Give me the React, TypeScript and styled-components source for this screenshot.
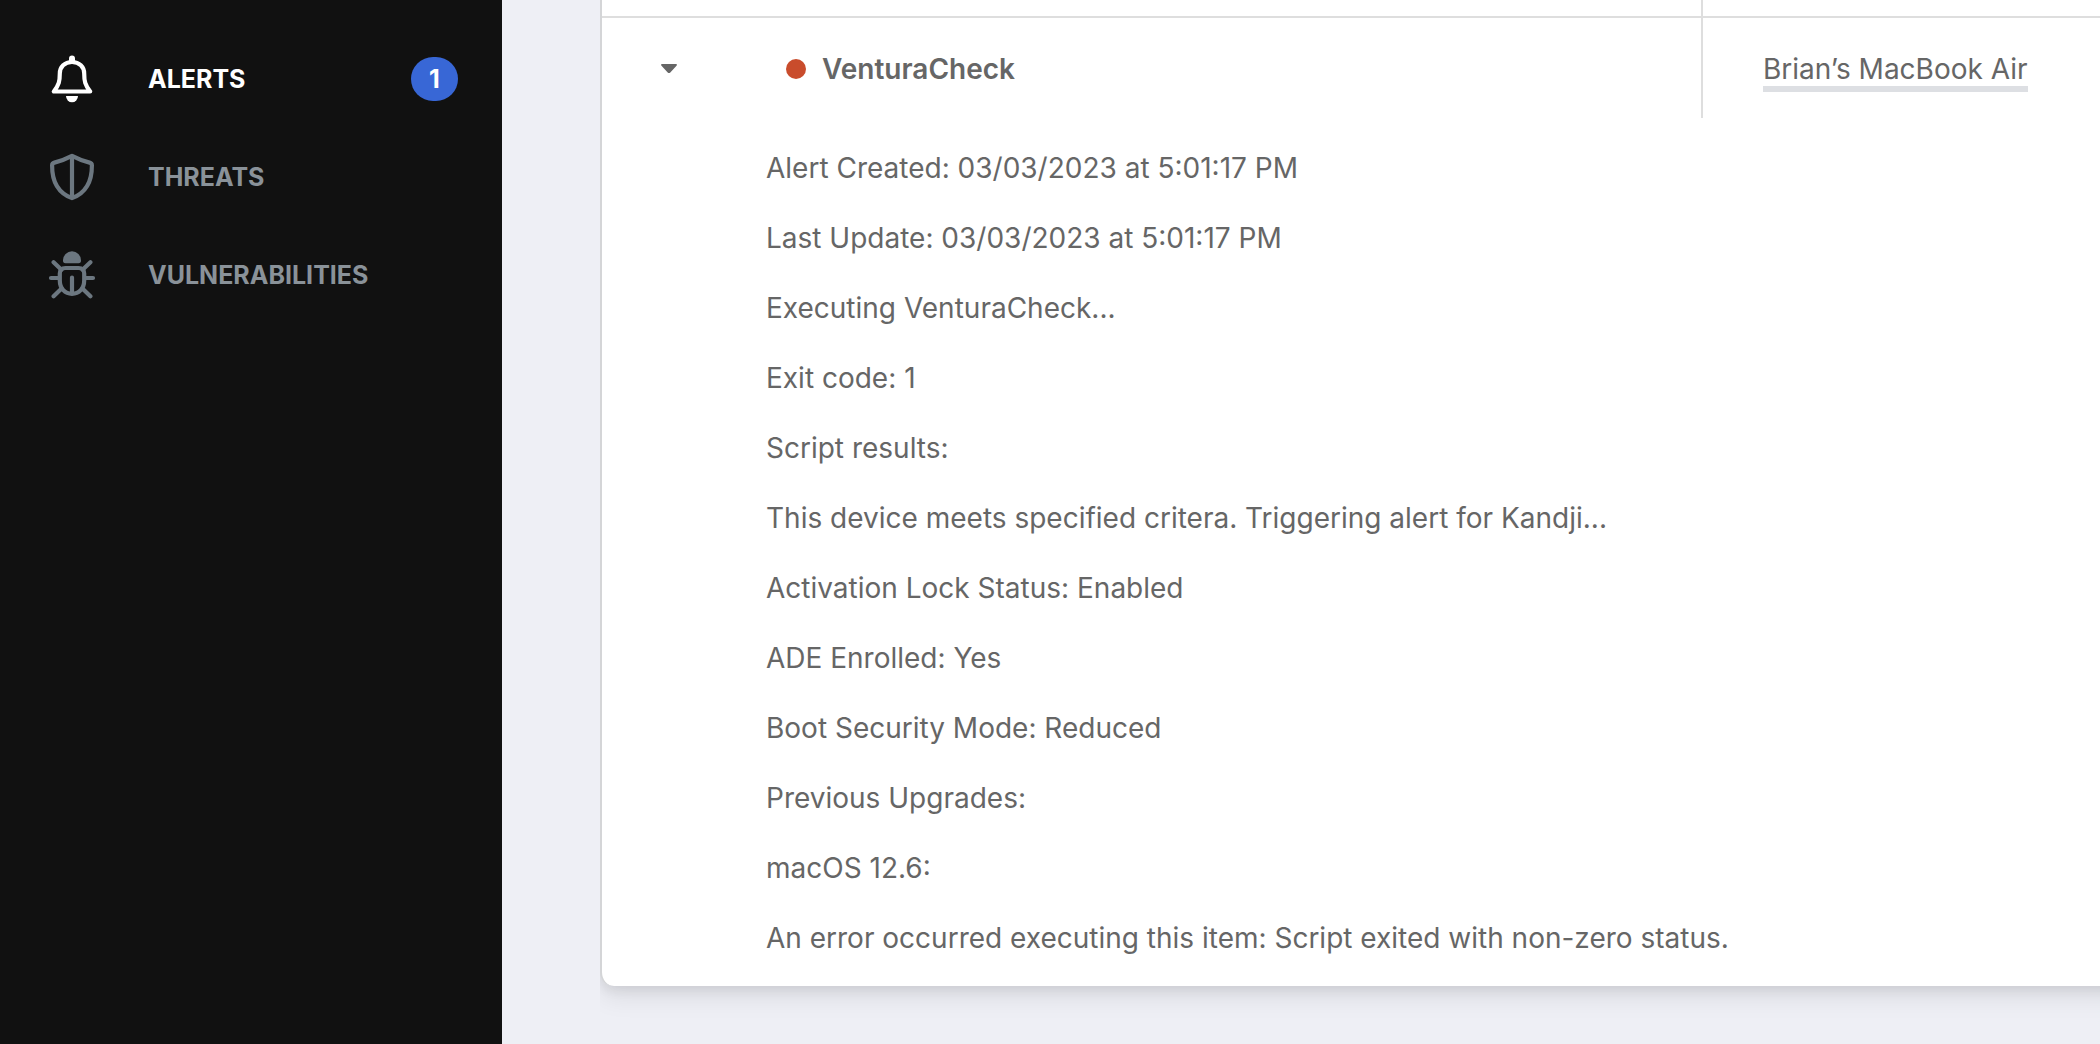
import React, { useState } from "react";
import styled, { createGlobalStyle } from "styled-components";

const GlobalStyle = createGlobalStyle`
  *, *::before, *::after { box-sizing: border-box; }
  body {
    margin: 0;
    background: #eeeff5;
    color: #666666;
    font-family: Inter, "Liberation Sans", sans-serif;
    font-size: 28px;
    line-height: 40px;
  }
`;

const Layout = styled.div`
  display: flex;
  min-height: 100vh;
  overflow: hidden;
`;

const Sidebar = styled.nav`
  flex: 0 0 502px;
  padding: 30px 44px 30px 48px;
  background: #111111;
`;

const NavItem = styled.a<{ $active?: boolean }>`
  display: flex;
  align-items: center;
  gap: 52px;
  height: 98px;
  color: ${(p) => (p.$active ? "#ffffff" : "#8a9299")};
  font-size: 25px;
  font-weight: 700;
  line-height: 32px;
  text-decoration: none;

  svg {
    flex: none;
    color: ${(p) => (p.$active ? "#ffffff" : "#6c7780")};
  }
`;

const Badge = styled.span`
  min-width: 47px;
  height: 44px;
  margin-left: auto;
  border-radius: 22px;
  background: #3867d6;
  color: #ffffff;
  line-height: 44px;
  text-align: center;
`;

const Main = styled.main`
  flex: 1;
  min-width: 0;
  padding-left: 98px;
`;

const CardClip = styled.div`
  overflow: hidden;
  padding-bottom: 56px;
`;

const Card = styled.section`
  overflow: hidden;
  margin-right: -40px;
  border-left: 2px solid #d4d5d7;
  border-bottom-left-radius: 14px;
  background: #ffffff;
  box-shadow: 0 12px 24px rgba(0, 0, 0, 0.08), 0 4px 12px rgba(0, 0, 0, 0.08);
`;

const Table = styled.table`
  width: 100%;
  border-collapse: separate;
  border-spacing: 0;
  table-layout: fixed;
`;

const ToggleCol = styled.col`
  width: 164px;
`;

const DeviceCol = styled.col`
  width: 439px;
`;

const Cell = styled.td<{ $divided?: boolean; $tail?: boolean }>`
  height: ${(p) => (p.$tail ? 18 : 100)}px;
  padding: ${(p) => (p.$tail ? 0 : 2)}px 0 0 ${(p) => (p.$divided ? 60 : 0)}px;
  border-bottom: ${(p) => (p.$tail ? "2px solid #dedede" : "none")};
  border-left: ${(p) => (p.$divided ? "2px solid #dedede" : "none")};
  vertical-align: middle;
`;

const Toggle = styled.button`
  display: flex;
  margin-left: 53px;
  padding: 10px 6px;
  border: 0;
  background: none;
  color: #666666;
  cursor: pointer;
`;

const AlertName = styled.div`
  display: flex;
  align-items: center;
  gap: 16px;
  padding-left: 20px;
  font-weight: 600;
`;

const Dot = styled.span`
  width: 20px;
  height: 20px;
  border-radius: 50%;
  background: #c94c2c;
`;

const DeviceLink = styled.a`
  border-bottom: 6px solid #dddfe3;
  color: inherit;
  text-decoration: none;
`;

const DetailCell = styled.td`
  padding: 15px 80px 13px 164px;
`;

const Line = styled.p`
  margin: 0;
  padding: 15px 0;
`;

const BellIcon = () => (
  <svg width="48" height="48" viewBox="0 0 48 48" fill="none" aria-hidden="true">
    <path
      d="M24 7C16.6 7 11.8 12 11.8 18.5C11.8 26 11 30 5.8 36.5H42.2C37 30 36.2 26 36.2 18.5C36.2 12 31.4 7 24 7Z"
      stroke="currentColor"
      strokeWidth="4.2"
      strokeLinejoin="round"
    />
    <path d="M21 7V3.6A3 3 0 0 1 27 3.6V7Z" fill="currentColor" />
    <path d="M18 41H30A6 6.3 0 0 1 18 41Z" fill="currentColor" />
  </svg>
);

const ShieldIcon = () => (
  <svg width="48" height="48" viewBox="0 0 48 48" fill="none" aria-hidden="true">
    <path
      d="M24 2.9C29.5 5.8 35 8 41.6 9.6C43.2 10 43.9 10.8 43.9 12.4C44 29 37.5 40 24 45.1C10.5 40 4 29 4.1 12.4C4.1 10.8 4.8 10 6.4 9.6C13 8 18.5 5.8 24 2.9Z"
      stroke="currentColor"
      strokeWidth="4.2"
      strokeLinejoin="round"
    />
    <path d="M24 3V45" stroke="currentColor" strokeWidth="4.2" />
  </svg>
);

const BugIcon = () => (
  <svg width="48" height="48" viewBox="0 0 48 48" fill="none" aria-hidden="true">
    <path
      d="M15 9.3A9 9 0 0 1 33 9.3C33 11.5 32.3 12.3 30.5 12.3H17.5C15.7 12.3 15 11.5 15 9.3Z"
      fill="currentColor"
    />
    <g stroke="currentColor" strokeWidth="4.2" strokeLinecap="round">
      <path d="M17.5 17H30.5C34.2 17 36.2 19 36.2 22.5V29.5C36.2 37.5 31 42.8 24 42.8S11.8 37.5 11.8 29.5V22.5C11.8 19 13.8 17 17.5 17Z" />
      <path d="M24 26.5V42M3 27H10.5M37.5 27H45M5.6 11.2L13.4 18.8M42.4 11.2L34.6 18.8M5.6 45.2L13.6 37.4M42.4 45.2L34.4 37.4" />
    </g>
  </svg>
);

const CaretIcon = () => (
  <svg width="16" height="10" viewBox="0 0 16 10" aria-hidden="true">
    <path
      d="M1 0H15C16 0 16.3 1 15.5 1.7L9.3 8.4Q8 9.6 6.7 8.4L.5 1.7C-.3 1 0 0 1 0Z"
      fill="currentColor"
    />
  </svg>
);

const navItems = [
  { label: "ALERTS", Icon: BellIcon, count: 1, active: true },
  { label: "THREATS", Icon: ShieldIcon },
  { label: "VULNERABILITIES", Icon: BugIcon },
];

const details = [
  "Alert Created: 03/03/2023 at 5:01:17 PM",
  "Last Update: 03/03/2023 at 5:01:17 PM",
  "Executing VenturaCheck...",
  "Exit code: 1",
  "Script results:",
  "This device meets specified critera. Triggering alert for Kandji...",
  "Activation Lock Status: Enabled",
  "ADE Enrolled: Yes",
  "Boot Security Mode: Reduced",
  "Previous Upgrades:",
  "macOS 12.6:",
  "An error occurred executing this item: Script exited with non-zero status.",
];

export default function App() {
  const [open, setOpen] = useState(true);

  return (
    <>
      <GlobalStyle />
      <Layout>
        <Sidebar>
          {navItems.map(({ label, Icon, count, active }) => (
            <NavItem key={label} href="#" $active={active}>
              <Icon />
              {label}
              {count && <Badge>{count}</Badge>}
            </NavItem>
          ))}
        </Sidebar>
        <Main>
          <CardClip>
            <Card>
              <Table>
                <colgroup>
                  <ToggleCol />
                  <col />
                  <DeviceCol />
                </colgroup>
                <tbody>
                  <tr>
                    <Cell $tail colSpan={2} />
                    <Cell $tail $divided />
                  </tr>
                  <tr>
                    <Cell>
                      <Toggle
                        type="button"
                        aria-label="Toggle alert details"
                        aria-expanded={open}
                        onClick={() => setOpen(!open)}
                      >
                        <CaretIcon />
                      </Toggle>
                    </Cell>
                    <Cell>
                      <AlertName>
                        <Dot />
                        VenturaCheck
                      </AlertName>
                    </Cell>
                    <Cell $divided>
                      <DeviceLink href="#">Brian’s MacBook Air</DeviceLink>
                    </Cell>
                  </tr>
                  {open && (
                    <tr>
                      <DetailCell colSpan={3}>
                        {details.map((line) => (
                          <Line key={line}>{line}</Line>
                        ))}
                      </DetailCell>
                    </tr>
                  )}
                </tbody>
              </Table>
            </Card>
          </CardClip>
        </Main>
      </Layout>
    </>
  );
}
